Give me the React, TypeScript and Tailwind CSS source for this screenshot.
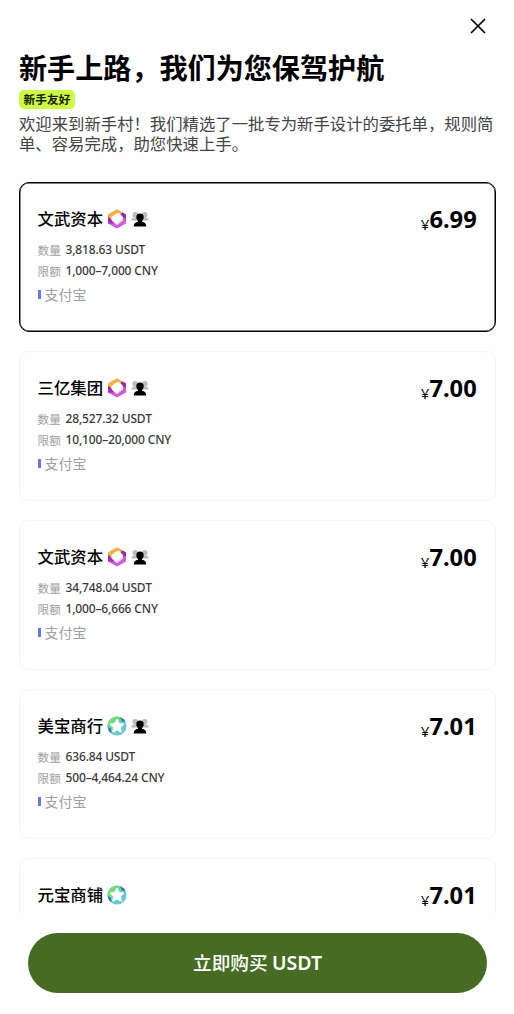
type Offer = {
  name: string;
  badge: 'gem' | 'star';
  group?: boolean;
  amount?: string;
  limit?: string;
  price: string;
  selected?: boolean;
};

const offers: Offer[] = [
  { name: '文武资本', badge: 'gem', group: true, amount: '3,818.63 USDT', limit: '1,000–7,000 CNY', price: '6.99', selected: true },
  { name: '三亿集团', badge: 'gem', group: true, amount: '28,527.32 USDT', limit: '10,100–20,000 CNY', price: '7.00' },
  { name: '文武资本', badge: 'gem', group: true, amount: '34,748.04 USDT', limit: '1,000–6,666 CNY', price: '7.00' },
  { name: '美宝商行', badge: 'star', group: true, amount: '636.84 USDT', limit: '500–4,464.24 CNY', price: '7.01' },
  { name: '元宝商铺', badge: 'star', price: '7.01' },
];

function GemIcon() {
  return (
    <svg viewBox="0 0 20 20" className="h-5 w-5">
      <path d="M10 .6 1 5.5v9l9 4.9 9-4.9v-9z" fill="#d05bdc" />
      <path d="M1 5.5 10 .6l5.4 2.9-2.8 2.4L4.5 11 1 8z" fill="#f0b53a" />
      <path d="m15.4 3.5 3.6 2v4.3L16 8.5l-3.4-2.6z" fill="#9130a3" />
      <path d="M1 7.8 4.5 10l2.3 4.5-5.8.1z" fill="#a52cb4" />
      <path d="M9.6 4.2h3l3.4 4v3l-5.2 4.4H9.2L4.4 11V8.2z" fill="#fff" />
      <path d="m16 8.2-6.8 7.4h1.6l5.2-4.4z" fill="#ddd" />
    </svg>
  );
}

function StarIcon() {
  return (
    <svg viewBox="0 0 20 20" className="h-5 w-5">
      <circle cx="10" cy="10" r="9.5" fill="#69c9d5" />
      <path d="M.5 11A9.5 9.5 0 0 1 14 1.4L10 9z" fill="#73dc79" />
      <path d="m13.2 1.1 3.8 2.5 1.6 2.5-4-.8z" fill="#397b91" />
      <path d="m.5 11 3.3 1.5.7 5-2.4-2.2z" fill="#397b91" />
      <path d="m10 3.6 1.9 4 4.4.6-3.2 3.1.8 4.4L10 13.6l-3.9 2.1.8-4.4-3.2-3.1 4.4-.6z" fill="#fff" stroke="#fff" strokeWidth="1.6" strokeLinejoin="round" />
    </svg>
  );
}

function GroupIcon() {
  return (
    <svg viewBox="0 0 18 16" className="h-4 w-[18px]">
      <g fill="#bdbdbd">
        <circle cx="4.3" cy="3.8" r="2.9" />
        <circle cx="13.7" cy="3.8" r="2.9" />
        <path d="M.4 9.6c0-2 1.1-2.9 3.9-3.1L8 8v1.6zM17.6 9.6c0-2-1.1-2.9-3.9-3.1L10 8v1.6z" />
      </g>
      <path d="M9 2.6a3.7 3.7 0 0 0-3.7 3.7c0 1.6.7 2.8 1.7 3.6v.8c-2.8.5-4.2 1.9-4.2 4.7h12.4c0-2.8-1.4-4.2-4.2-4.7v-.8c1-.8 1.7-2 1.7-3.6A3.7 3.7 0 0 0 9 2.6z" fill="#000" />
    </svg>
  );
}

function Detail({ label, value }: { label: string; value: string }) {
  return (
    <div className="flex h-[21px] items-center whitespace-nowrap text-[11.7px] leading-5">
      <span className="w-[28px] text-[#a0a0a0]">{label}</span>
      <span className="mt-px font-['Noto_Sans',sans-serif] text-[12px] font-medium tracking-[-0.15px] text-[#3a3a3a]">{value}</span>
    </div>
  );
}

function OfferCard({ offer }: { offer: Offer }) {
  return (
    <article className={`h-[150px] shrink-0 rounded-[10px] border px-[17.5px] pt-[23px] ${offer.selected ? 'border-black shadow-[inset_0_0_0_0.5px_#000]' : 'border-[#f4f4f4]'}`}>
      <div className="flex h-[26px] items-center justify-between">
        <div className="flex items-center whitespace-nowrap text-[16.4px] leading-6 font-medium text-black">
          <span className="mr-[3.5px] -translate-y-px">{offer.name}</span>
          {offer.badge === 'gem' ? <GemIcon /> : <StarIcon />}
          {offer.group && <span className="ml-[4.5px]"><GroupIcon /></span>}
        </div>
        <div className="mt-[2px] mr-[0.8px] flex items-baseline font-['Noto_Sans',sans-serif] text-black">
          <span className="translate-y-[2px] text-[15px] leading-6">¥</span>
          <span className="text-[23.7px] leading-6 font-bold">{offer.price}</span>
        </div>
      </div>
      {offer.amount && offer.limit && (
        <>
          <div className="mt-[7px]">
            <Detail label="数量" value={offer.amount} />
            <Detail label="限额" value={offer.limit} />
          </div>
          <div className="mt-px flex h-6 items-center text-[14px] leading-6 text-[#a0a0a0]">
            <span className="mr-[4px] h-[9px] w-[3px] bg-[#6478ea]" />
            支付宝
          </div>
        </>
      )}
    </article>
  );
}

export default function App() {
  return (
    <main className="flex h-[1014px] w-[514px] flex-col overflow-hidden bg-[#fefefe] font-['Noto_Sans_CJK_SC',sans-serif]">
      <header className="shrink-0 pr-[18px] pl-[19px]">
        <div className="flex h-[50px] justify-end pt-[18px] pr-[10.5px]">
          <button aria-label="关闭" className="h-4 w-4">
            <svg viewBox="0 0 16 16" className="h-4 w-4" fill="none" stroke="#000" strokeWidth="1.7"><path d="m1 1 14 14M15 1 1 15" /></svg>
          </button>
        </div>
        <h1 className="h-[40px] text-[28.1px] leading-[34px] font-bold text-black">新手上路，我们为您保驾护航</h1>
        <div className="flex h-[19px] w-[56px] items-center justify-center rounded-[5px] bg-[#cbfb45] text-[11.7px] leading-[19px] font-bold text-[#172000]"><span className="-translate-y-px">新手友好</span></div>
        <p className="mt-[5px] h-[68px] whitespace-nowrap text-[16.38px] leading-[19.5px] text-[#444]">欢迎来到新手村！我们精选了一批专为新手设计的委托单，规则简<br />单、容易完成，助您快速上手。</p>
      </header>
      <section className="flex h-[731px] shrink-0 flex-col gap-[19px] overflow-hidden pr-[18px] pl-[19px]">
        {offers.map((offer, index) => <OfferCard key={index} offer={offer} />)}
      </section>
      <footer className="pt-5 pr-[27px] pl-7">
        <button className="h-[60px] w-full rounded-full bg-[#456c22] text-[18.7px] font-medium text-white">立即购买 <span className="font-['Noto_Sans',sans-serif] text-[19.5px] font-semibold">USDT</span></button>
      </footer>
    </main>
  );
}
